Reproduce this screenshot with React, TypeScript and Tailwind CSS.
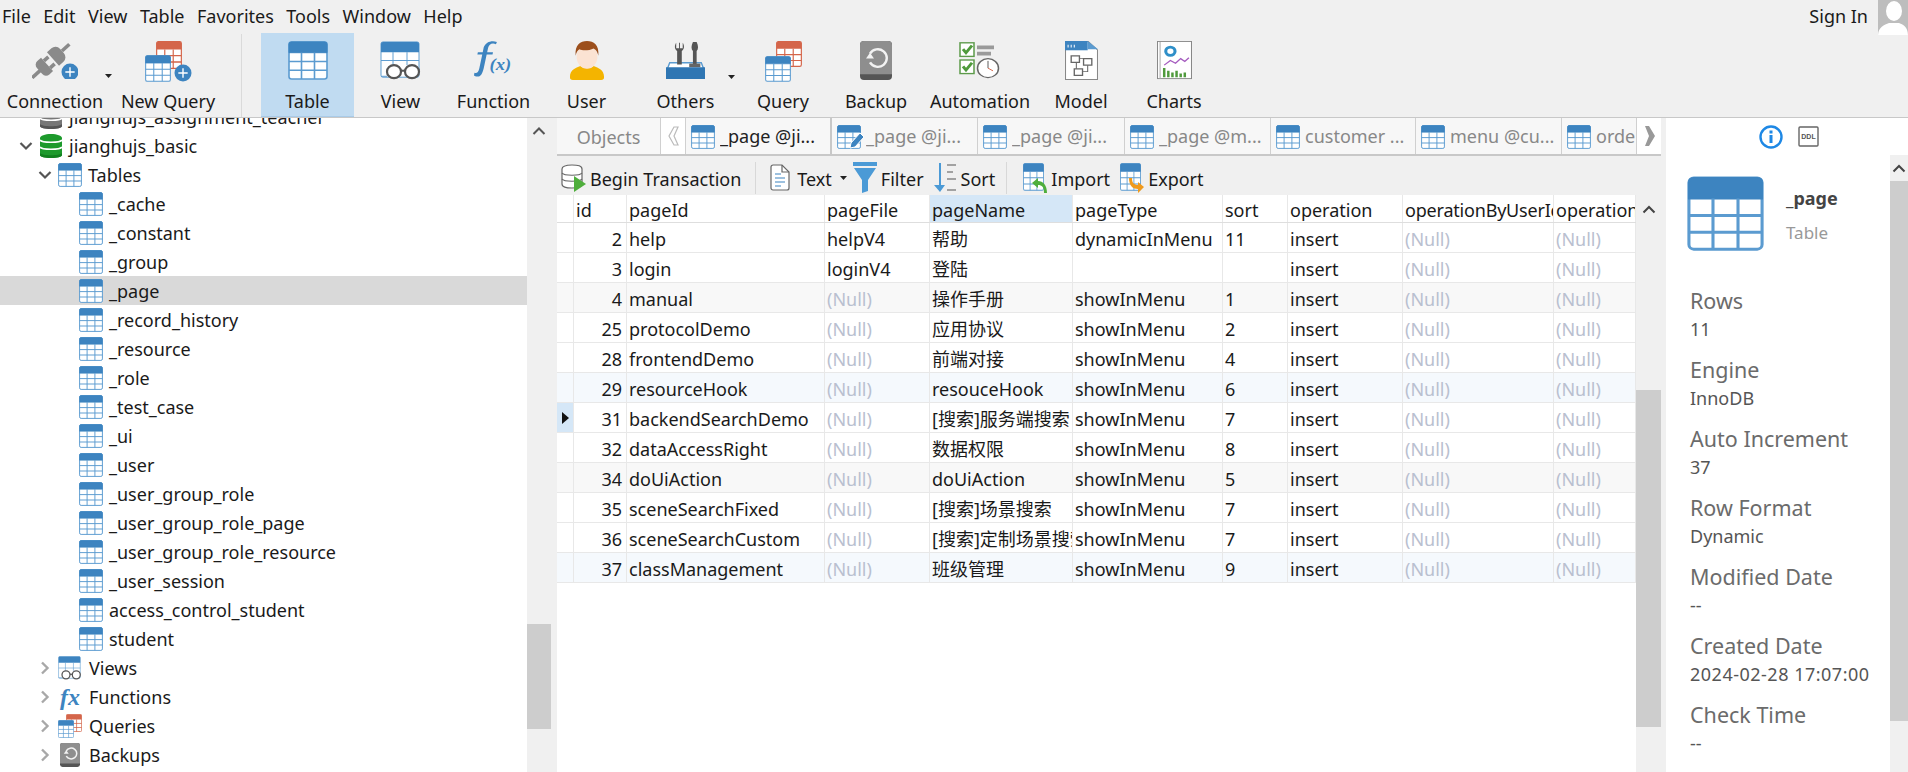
import { ReactNode } from "react";

const BLUE = "#3d84c0";
const CELL = "#5b9bd0";

const TableIcon = ({ w = 24, h = 24, className = "" }: { w?: number; h?: number; className?: string }) => (
  <svg width={w} height={h} viewBox="0 0 40 40" preserveAspectRatio="none" className={className}>
    <rect x="1" y="1" width="38" height="38" rx="2.5" fill="#fff" stroke={CELL} strokeWidth="1.6" />
    <path d="M1 12V3.5A2.5 2.5 0 0 1 3.5 1h33A2.5 2.5 0 0 1 39 3.5V12z" fill={BLUE} stroke={BLUE} />
    <path d="M1 21h38M1 30h38M13.5 12v27M26.500 12v27" stroke={CELL} strokeWidth="1.6" fill="none" />
  </svg>
);

const OrangeTable = ({ className = "" }: { className?: string }) => (
  <svg viewBox="0 0 40 40" preserveAspectRatio="none" className={className}>
    <rect x="1" y="1" width="38" height="38" rx="2.5" fill="#fff" stroke="#d4654a" strokeWidth="1.8" />
    <path d="M1 12V3.500A2.500 2.500 0 0 1 3.500 1h33A2.500 2.500 0 0 1 39 3.500V12z" fill="#d4654a" />
    <path d="M1 21h38M1 30h38M13.500 12v27M26.500 12v27" stroke="#d4654a" strokeWidth="1.800" fill="none" />
  </svg>
);

const PlusBadge = ({ x, y, r }: { x: number; y: number; r: number }) => (
  <g>
    <circle cx={x} cy={y} r={r} fill={BLUE} />
    <path d={`M${x - r * 0.55} ${y}h${r * 1.1}M${x} ${y - r * 0.55}v${r * 1.1}`} stroke="#fff" strokeWidth="1.4" />
  </g>
);

const PlugIcon = () => (
  <svg width="46" height="38" viewBox="0 0 46 38">
    <g transform="translate(21 18) rotate(-42)" fill="#8a8a8a">
      <rect x="-28" y="-1.800" width="12" height="3.600" />
      <path d="M-18 -4a5 5 0 0 1 5-5h5V9h-5a5 5 0 0 1-5-5z" />
      <rect x="-8" y="-6.500" width="6" height="3.600" />
      <rect x="-8" y="2.900" width="6" height="3.600" />
      <path d="M0-9h6a6 6 0 0 1 6 6V3a6 6 0 0 1-6 6H0z" />
      <rect x="12" y="-1.800" width="10" height="3.600" />
    </g>
    <PlusBadge x={38} y={31} r={8.500} />
  </svg>
);

const NewQueryIcon = () => (
  <div className="relative h-[41px] w-[47px]">
    <OrangeTable className="absolute left-[11px] top-0 h-[28px] w-[26px]" />
    <TableIcon w={26} h={27} className="absolute left-0 top-[14px]" />
    <svg width="18" height="18" viewBox="0 0 18 18" className="absolute left-[29px] top-[23px]">
      <PlusBadge x={9} y={9} r={8.500} />
    </svg>
  </div>
);

const ViewIcon = ({ w = 42, h = 39 }: { w?: number; h?: number }) => (
  <svg width={w} height={h} viewBox="0 0 42 42" preserveAspectRatio="none">
    <rect x="1" y="1" width="38" height="38" rx="2" fill="#fff" stroke={CELL} strokeWidth="1" />
    <path d="M1 12V3A2 2 0 0 1 3 1h34a2 2 0 0 1 2 2v9z" fill={BLUE} />
    <path d="M1 21h38M13 12v14M27 12v14M1 38h6" stroke={CELL} strokeWidth="1" fill="none" />
    <circle cx="14" cy="33" r="7" fill="#fff" stroke="#555" strokeWidth="2.2" />
    <circle cx="32" cy="33" r="7" fill="#fff" stroke="#555" strokeWidth="2.2" />
    <path d="M21 32h4" stroke="#555" strokeWidth="2.2" />
  </svg>
);

const FunctionIcon = () => (
  <svg width="43" height="38" viewBox="0 0 44 42" preserveAspectRatio="none">
    <path d="M2 38c5 3 8 1 10-8l3-15h6l.5-2.500h-6l1-5c1-4 4-6 8-4l1-2.500C20-1 14 1 12 7l-1 5.500H6L5.500 15h5L7.500 30c-1 5-3 6-5 5z" fill={BLUE} />
    <text x="18" y="32" fontFamily="'Liberation Serif',serif" fontStyle="italic" fontSize="19" fontWeight="700" fill={BLUE}>(x)</text>
  </svg>
);

const UserIcon = () => (
  <svg width="36" height="39" viewBox="0 0 38 42" preserveAspectRatio="none">
    <path d="M1 39c0-8 6-10 11-12 3 3 11 3 14 0 5 2 11 4 11 12 0 2-1 3-3 3H4c-2 0-3-1-3-3z" fill="#f4b400" />
    <ellipse cx="19" cy="17" rx="11" ry="13" fill="#fbe3d3" />
    <path d="M7 16C6 4 12 0 19 0s13 4 12 16c-1-5-3-7-5-8-4 2-11 3-15 1-2 1-3 3-4 7z" fill="#9c4f1c" />
  </svg>
);

const OthersIcon = () => (
  <svg width="39" height="38" viewBox="0 0 42 42" preserveAspectRatio="none">
    <path d="M4 24h34l3 8v8H1v-8z" fill="#fff" stroke="#5b9bd0" strokeWidth="1.500" />
    <path d="M8 2c-2 3-2 7 1 9v15h5V11c3-2 3-6 1-9v6h-3V2h-1v6H8z" fill="#555" transform="translate(3 0)" />
    <path d="M29 1c-2 4-2 8 0 10v15h4V11c2-2 2-6 0-10z" fill="#555" />
    <path d="M25 25h12v4H25z" fill="#666" />
    <path d="M0 29h42v13H0z" fill="#2f76b3" />
  </svg>
);

const QueryIcon = () => (
  <div className="relative h-[41px] w-[37px]">
    <OrangeTable className="absolute left-[11px] top-0 h-[26px] w-[26px]" />
    <TableIcon w={26} h={26} className="absolute left-0 top-[15px]" />
  </div>
);

const BackupIcon = ({ w = 32, h = 39 }: { w?: number; h?: number }) => (
  <svg width={w} height={h} viewBox="0 0 32 40" preserveAspectRatio="none">
    <rect x="0" y="0" width="32" height="40" rx="4" fill="#555" />
    <path d="M0 4a4 4 0 0 1 4-4h24a4 4 0 0 1 4 4v30H0z" fill="#8e8e8e" />
    <path d="M9 13a9 9 0 1 1 0 9" fill="none" stroke="#f2f2f2" strokeWidth="2.400" transform="translate(1 0)" />
    <path d="M6 18h8l-4-6z" fill="#f2f2f2" />
  </svg>
);

const AutomationIcon = () => (
  <svg width="42" height="38" viewBox="0 0 42 42" preserveAspectRatio="none">
    <rect x="1" y="2" width="14" height="15" fill="#fff" stroke="#5c9a4a" strokeWidth="1.500" />
    <path d="M4 9l3 4 6-8" fill="none" stroke="#4f9a3c" strokeWidth="3" />
    <rect x="1" y="21" width="14" height="15" fill="#fff" stroke="#5c9a4a" strokeWidth="1.500" />
    <path d="M4 28l3 4 6-8" fill="none" stroke="#4f9a3c" strokeWidth="3" />
    <path d="M18 5h17v4H18zM18 12h14v4H18z" fill="#9a9a9a" />
    <circle cx="29" cy="30" r="10.500" fill="#fff" stroke="#666" strokeWidth="1.500" />
    <path d="M29 22v8" stroke="#555" strokeWidth="1" />
    <path d="M29 30l5 3" stroke="#d4654a" strokeWidth="1" />
  </svg>
);

const ModelIcon = () => (
  <svg width="33" height="39" viewBox="0 0 32 42" preserveAspectRatio="none">
    <path d="M.5.5h22l9 9v32H.5z" fill="#fff" stroke="#888" />
    <path d="M0 0h22v10H0z" fill={BLUE} />
    <path d="M22 0l10 9H22z" fill="#5b9bd0" />
    <path d="M3 7V4M6 7V4M9 7V4" stroke="#fff" />
    <path d="M6 16h8v7H6zM18 19h8v7h-8zM9 30h8v7H9z" fill="#fff" stroke="#666" strokeWidth="1.300" />
    <path d="M14 19h4M11 23v7M22 26v7h-5" stroke="#666" fill="none" />
  </svg>
);

const ChartsIcon = () => (
  <svg width="35" height="39" viewBox="0 0 34 42" preserveAspectRatio="none">
    <rect x=".5" y=".5" width="33" height="40" fill="#fff" stroke="#888" />
    <path d="M3 1v40" stroke="#aaa" />
    <circle cx="13" cy="11" r="4.500" fill="none" stroke="#2f8fc8" strokeWidth="3" />
    <path d="M7 26l6-5 5 3 5-5 4 3 4-4" fill="none" stroke="#a55bbf" strokeWidth="1.300" />
    <path d="M7 39V29M11 39V32M15 39V34M19 39V32M23 39V35M27 39V34" stroke="#4f9a3c" strokeWidth="2.400" />
  </svg>
);

const DbIcon = ({ color, dark }: { color: string; dark: string }) => (
  <svg width="24" height="24" viewBox="0 0 24 24">
    <path d="M1 4c0-2 5-4 11-4s11 2 11 4v17c0 2-5 3-11 3S1 23 1 21z" fill={color} />
    <path d="M1 6c2 3 20 3 22 0M1 13c2 3 20 3 22 0" fill="none" stroke="#fff" strokeWidth="1.600" />
    <path d="M1 19c2 3 20 3 22 0v2c0 2-5 3-11 3S1 23 1 21z" fill={dark} />
  </svg>
);

const Chevron = ({ open }: { open: boolean }) => (
  <svg width="14" height="14" viewBox="0 0 14 14">
    {open ? (
      <path d="M1.500 4 7 9.500 12.500 4" fill="none" stroke="#555" strokeWidth="2.200" />
    ) : (
      <path d="M4 1.500 9.500 7 4 12.500" fill="none" stroke="#a8a8a8" strokeWidth="2.400" />
    )}
  </svg>
);

const Caret = () => (
  <svg width="7" height="4" viewBox="0 0 7 4">
    <path d="M0 0h7L3.500 4z" fill="#222" />
  </svg>
);

const ToolButton = ({ width, icon, label, active, caret }: { width: string; icon: ReactNode; label: string; active?: boolean; caret?: boolean }) => (
  <div className={`relative flex h-[84px] shrink-0 flex-col items-center ${width} ${active ? "border-b border-[#a9cbe8] bg-[#c0dbf1]" : ""}`}>
    <div className="mt-[8px] flex h-[40px] items-start">{icon}</div>
    <div className="mt-[8px] whitespace-nowrap text-[18px] leading-[24px] text-[#1a1a1a]">{label}</div>
    {caret && (
      <div className="absolute right-[3px] top-[42px] flex">
        <Caret />
      </div>
    )}
  </div>
);

const tables = [
  "_cache", "_constant", "_group", "_page", "_record_history", "_resource", "_role", "_test_case", "_ui", "_user",
  "_user_group_role", "_user_group_role_page", "_user_group_role_resource", "_user_session", "access_control_student", "student",
];

const TreeRow = ({ indent, chevron, icon, label, selected, gap = "ml-[6px]" }: { indent: string; chevron?: "open" | "closed"; icon: ReactNode; label: string; selected?: boolean; gap?: string }) => (
  <div className={`flex h-[29px] items-center ${indent} ${selected ? "bg-[#d9d9d9]" : ""}`}>
    <div className="flex w-[20px] shrink-0 justify-start">{chevron && <Chevron open={chevron === "open"} />}</div>
    <div className="flex w-[24px] shrink-0 justify-center">{icon}</div>
    <span className={`whitespace-nowrap pt-[2px] text-[18px] text-[#1a1a1a] ${gap}`}>{label}</span>
  </div>
);

const Sidebar = () => (
  <div className="flex w-[557px] shrink-0 bg-[#f0f0f0]">
    <div className="h-full w-[527px] overflow-hidden bg-white">
      <div className="mt-[-16px]">
        <TreeRow indent="pl-[19px]" icon={<DbIcon color="#777" dark="#555" />} label="jianghujs_assignment_teacher" />
        <TreeRow indent="pl-[19px]" chevron="open" icon={<DbIcon color="#1d9a2c" dark="#12801f" />} label="jianghujs_basic" />
        <TreeRow indent="pl-[38px]" chevron="open" icon={<TableIcon />} label="Tables" />
        {tables.map((t) => (
          <TreeRow key={t} indent="pl-[59px]" icon={<TableIcon />} label={t} selected={t === "_page"} />
        ))}
        <TreeRow indent="pl-[38px]" chevron="closed" gap="ml-[7px]" icon={<ViewIcon w={24} h={24} />} label="Views" />
        <TreeRow
          indent="pl-[38px]"
          chevron="closed"
          gap="ml-[7px]"
          icon={<span className="font-['Liberation_Serif',serif] text-[24px] font-bold italic leading-[24px] text-[#3d84c0]">fx</span>}
          label="Functions"
        />
        <TreeRow
          indent="pl-[38px]"
          chevron="closed"
          gap="ml-[7px]"
          icon={
            <div className="relative h-[24px] w-[24px]">
              <OrangeTable className="absolute left-[8px] top-0 h-[18px] w-[16px]" />
              <TableIcon w={16} h={18} className="absolute left-0 top-[6px]" />
            </div>
          }
          label="Queries"
        />
        <TreeRow indent="pl-[38px]" chevron="closed" gap="ml-[7px]" icon={<BackupIcon w={20} h={24} />} label="Backups" />
      </div>
    </div>
    <div className="flex w-[24px] shrink-0 flex-col">
      <div className="flex h-[26px] items-center justify-center">
        <svg width="14" height="14" viewBox="0 0 14 14">
          <path d="M1.500 10 7 4.500 12.500 10" fill="none" stroke="#555" strokeWidth="2" />
        </svg>
      </div>
      <div className="mt-[480px] h-[105px] bg-[#cdcdcd]" />
    </div>
  </div>
);

const tabs = [
  { label: "_page @ji...", w: "w-[146px]", active: true },
  { label: "_page @ji...", w: "w-[146px]", edit: true },
  { label: "_page @ji...", w: "w-[147px]" },
  { label: "_page @m...", w: "w-[146px]" },
  { label: "customer ...", w: "w-[145px]" },
  { label: "menu @cu...", w: "w-[146px]" },
  { label: "orde", w: "w-[75px]" },
];

const TabBar = () => (
  <div className="flex h-[38px] shrink-0 border-b-2 border-[#c8c8c8] bg-[#f7f7f7]">
    <div className="flex w-[103px] shrink-0 items-center justify-center pt-[2px] text-[18px] text-[#888]">Objects</div>
    <div className="flex w-[26px] shrink-0 items-center justify-center border-x border-[#d0d0d0] bg-white">
      <svg width="11" height="20" viewBox="0 0 11 20">
        <path d="M6 1 1 10l5 9h4L6 10l4-9z" fill="#fff" stroke="#bbb" strokeWidth="1.200" />
      </svg>
    </div>
    {tabs.map((t, i) => (
      <div key={i} className={`flex shrink-0 items-center gap-[5px] pl-[5px] pt-[1px] ${t.w} ${i > 0 ? "border-r border-[#d0d0d0]" : "border-r-2 border-[#c8c8c8]"}`}>
        <div className="relative shrink-0">
          <TableIcon w={24} h={24} />
          {t.edit && (
            <svg width="16" height="18" viewBox="0 0 16 18" className="absolute bottom-0 right-[-4px]">
              <path d="M2 12 11 2l4 4-9 10-5 1z" fill="#3d84c0" stroke="#fff" />
            </svg>
          )}
        </div>
        <span className={`overflow-hidden whitespace-nowrap text-[18px] ${t.active ? "text-[#222]" : "text-[#888]"}`}>{t.label}</span>
      </div>
    ))}
    <div className="flex flex-1 items-center justify-center bg-white">
      <svg width="11" height="20" viewBox="0 0 11 20">
        <path d="M1 0h4l6 10-6 10H1l4-10z" fill="#999" />
      </svg>
    </div>
  </div>
);

const SubItem = ({ icon, label, ml, caret }: { icon: ReactNode; label: string; ml: string; caret?: boolean }) => (
  <div className={`flex items-center ${ml}`}>
    {icon}
    <span className="ml-[4px] whitespace-nowrap pt-[3px] text-[18px] text-[#1a1a1a]">{label}</span>
    {caret && (
      <span className="ml-[8px] flex">
        <Caret />
      </span>
    )}
  </div>
);

const SubToolbar = () => (
  <div className="flex h-[39px] shrink-0 items-center bg-[#f0f0f0] pl-[4px] pt-[4px]">
    <SubItem
      ml=""
      label="Begin Transaction"
      icon={
        <svg width="25" height="28" viewBox="0 0 25 28">
          <path d="M1 5c0-3 4-4 10-4s10 1 10 4v15c0 3-4 4-10 4S1 23 1 20z" fill="#fff" stroke="#666" strokeWidth="1.200" />
          <path d="M1 9c2 3 18 3 20 0M1 15c2 3 18 3 20 0" fill="none" stroke="#666" strokeWidth="1.200" />
          <path d="M13 12v16l12-8z" fill="#4fae3c" />
        </svg>
      }
    />
    <div className="ml-[14px] h-[32px] w-px bg-[#d8d8d8]" />
    <SubItem
      ml="ml-[14px]"
      label="Text"
      caret
      icon={
        <svg width="20" height="27" viewBox="0 0 20 27" className="mr-[3px]">
          <path d="M1 3a2 2 0 0 1 2-2h9l7 7v16a2 2 0 0 1-2 2H3a2 2 0 0 1-2-2z" fill="#fff" stroke="#666" strokeWidth="1.200" />
          <path d="M12 1v7h7" fill="none" stroke="#666" strokeWidth="1.200" />
          <path d="M5 10h6M5 14h10M5 18h10M5 22h6" stroke="#3d84c0" strokeWidth="1.200" />
        </svg>
      }
    />
    <SubItem
      ml="ml-[6px]"
      label="Filter"
      icon={
        <svg width="24" height="31" viewBox="0 0 24 31">
          <path d="M0 0h24v4H0zM1 6h22l-8 12v11l-6 2V18z" fill="#4b9ad6" />
        </svg>
      }
    />
    <SubItem
      ml="ml-[10px]"
      label="Sort"
      icon={
        <svg width="23" height="29" viewBox="0 0 23 29">
          <path d="M5 0h2v22h4l-5 7-6-7h5z" fill="#4b9ad6" />
          <path d="M13 2h9M13 9h6M13 16h9M13 27h9" stroke="#888" strokeWidth="1.400" />
        </svg>
      }
    />
    <div className="ml-[11px] h-[32px] w-px bg-[#d8d8d8]" />
    <SubItem
      ml="ml-[16px]"
      label="Import"
      icon={
        <div className="relative h-[30px] w-[24px]">
          <TableIcon w={21} h={28} />
          <svg width="15" height="15" viewBox="0 0 15 15" className="absolute bottom-0 right-0">
            <path d="M6 0 0 5l6 5V7c4 0 6 2 6 8h3C15 7 11 3 6 3z" fill="#4fae3c" />
          </svg>
        </div>
      }
    />
    <SubItem
      ml="ml-[10px]"
      label="Export"
      icon={
        <div className="relative h-[30px] w-[24px]">
          <TableIcon w={21} h={28} />
          <svg width="15" height="15" viewBox="0 0 15 15" className="absolute bottom-0 right-0">
            <path d="M0 0h3c0 5 2 7 6 7V4l6 5-6 6v-4C4 11 0 8 0 0z" fill="#f09a1c" />
          </svg>
        </div>
      }
    />
  </div>
);

const CJK = (v: string) => /[\u4e00-\u9fff]/.test(v);
const N = "(Null)";
const rows: [string, string, string, string, string, string][] = [
  ["2", "help", "helpV4", "帮助", "dynamicInMenu", "11"],
  ["3", "login", "loginV4", "登陆", "", ""],
  ["4", "manual", N, "操作手册", "showInMenu", "1"],
  ["25", "protocolDemo", N, "应用协议", "showInMenu", "2"],
  ["28", "frontendDemo", N, "前端对接", "showInMenu", "4"],
  ["29", "resourceHook", N, "resouceHook", "showInMenu", "6"],
  ["31", "backendSearchDemo", N, "[搜索]服务端搜索", "showInMenu", "7"],
  ["32", "dataAccessRight", N, "数据权限", "showInMenu", "8"],
  ["34", "doUiAction", N, "doUiAction", "showInMenu", "5"],
  ["35", "sceneSearchFixed", N, "[搜索]场景搜索", "showInMenu", "7"],
  ["36", "sceneSearchCustom", N, "[搜索]定制场景搜索", "showInMenu", "7"],
  ["37", "classManagement", N, "班级管理", "showInMenu", "9"],
];

const rowBg = ["", "", "bg-[#f8f8f8]", "", "", "bg-[#f5f9fd]", "", "", "bg-[#f8f8f8]", "", "", "bg-[#f5f9fd]"];
const COLS = "grid-cols-[17px_53px_198px_105px_143px_150px_65px_115px_151px_82px]";

const Cell = ({ children, right, className = "" }: { children?: ReactNode; right?: boolean; className?: string }) => (
  <div className={`overflow-hidden whitespace-nowrap border-r border-b border-[#e8e8e8] text-[18px] leading-[32px] ${right ? "pr-[4px] text-right" : "pl-[2px]"} ${className}`}>
    {children}
  </div>
);

const Grid = () => (
  <div className="flex min-h-0 flex-1 bg-white">
    <div className="w-[1079px] shrink-0">
      <div className={`grid ${COLS} h-[28px] border-b border-[#dedede] text-[#1a1a1a]`}>
        {["", "id", "pageId", "pageFile", "pageName", "pageType", "sort", "operation", "operationByUserId", "operationAt"].map((h, i) => (
          <div
            key={i}
            className={`overflow-hidden whitespace-nowrap border-r border-[#e8e8e8] pl-[2px] text-[18px] leading-[30px] ${i === 8 ? "tracking-[-0.2px]" : ""} ${h === "pageName" ? "bg-[#d5e7f7]" : ""}`}
          >
            {h}
          </div>
        ))}
      </div>
      {rows.map((r, i) => (
        <div key={r[0]} className={`grid ${COLS} h-[30px] text-[#1a1a1a] ${rowBg[i]}`}>
          <Cell className={`flex items-center !pl-[5px] ${r[0] === "31" ? "bg-[#d5e7f7]" : ""}`}>
            {r[0] === "31" && (
              <svg width="7" height="12" viewBox="0 0 7 12">
                <path d="M0 0l7 6-7 6z" fill="#111" />
              </svg>
            )}
          </Cell>
          <Cell right>{r[0]}</Cell>
          <Cell>{r[1]}</Cell>
          <Cell className={r[2] === N ? "text-[#b9c0d0]" : ""}>{r[2]}</Cell>
          <Cell className={CJK(r[3]) ? "text-[17px]" : ""}>{r[3]}</Cell>
          <Cell>{r[4]}</Cell>
          <Cell>{r[5]}</Cell>
          <Cell>insert</Cell>
          <Cell className="text-[#b9c0d0]">{N}</Cell>
          <Cell className="text-[#b9c0d0]">{N}</Cell>
        </div>
      ))}
    </div>
    <div className="flex w-[25px] shrink-0 flex-col bg-[#f0f0f0]">
      <div className="flex h-[28px] items-center justify-center">
        <svg width="14" height="10" viewBox="0 0 14 10">
          <path d="M1.500 8.500 7 3l5.500 5.500" fill="none" stroke="#444" strokeWidth="2" />
        </svg>
      </div>
      <div className="mt-[167px] h-[337px] bg-[#cdcdcd]" />
    </div>
  </div>
);

const props = [
  ["Rows", "11"],
  ["Engine", "InnoDB"],
  ["Auto Increment", "37"],
  ["Row Format", "Dynamic"],
  ["Modified Date", "--"],
  ["Created Date", "2024-02-28 17:07:00"],
  ["Check Time", "--"],
];

const RightPanel = () => (
  <div className="flex w-[242px] shrink-0 flex-col bg-white">
    <div className="flex h-[37px] shrink-0 items-center pl-[93px]">
      <svg width="24" height="24" viewBox="0 0 24 24">
        <circle cx="12" cy="12" r="10.500" fill="#fff" stroke="#1e88e5" strokeWidth="2.400" />
        <path d="M10.500 10h3v8h-3zM10.500 5.500h3v3h-3z" fill="#1e88e5" />
      </svg>
      <svg width="21" height="21" viewBox="0 0 21 21" className="ml-[15px]">
        <rect x="1" y="1" width="19" height="19" rx="1" fill="#fff" stroke="#666" strokeWidth="1.400" />
        <text x="10.500" y="13" textAnchor="middle" fontFamily="'Liberation Sans',sans-serif" fontSize="7" fontWeight="700" fill="#555">DDL</text>
      </svg>
    </div>
    <div className="flex min-h-0 flex-1">
      <div className="w-[224px] shrink-0 overflow-hidden pl-[24px]">
        <div className="mt-[21px] flex h-[75px]">
          <div className="ml-[-3px] shrink-0">
            <TableIcon w={77} h={75} />
          </div>
          <div className="ml-[22px] flex flex-col">
            <div className="mt-[10px] text-[18px] font-bold leading-[24px] text-[#444]">_page</div>
            <div className="mt-[11px] text-[17px] leading-[24px] text-[#999]">Table</div>
          </div>
        </div>
        <div className="mt-[33px]">
          {props.map(([k, v]) => (
            <div key={k} className="h-[69px] whitespace-nowrap">
              <div className="text-[21.500px] leading-[34px] text-[#6b6b6b]">{k}</div>
              <div className={`text-[18px] leading-[22px] text-[#555] ${v.startsWith("2024") ? "tracking-[0.5px]" : ""}`}>{v}</div>
            </div>
          ))}
        </div>
      </div>
      <div className="flex flex-1 flex-col bg-[#f0f0f0]">
        <div className="flex h-[26px] shrink-0 items-center justify-center">
          <svg width="14" height="10" viewBox="0 0 14 10">
            <path d="M1.500 8.500 7 3l5.500 5.500" fill="none" stroke="#444" strokeWidth="2" />
          </svg>
        </div>
        <div className="h-[540px] bg-[#cdcdcd]" />
      </div>
    </div>
  </div>
);

export default function App() {
  return (
    <div className="flex h-[772px] w-[1908px] flex-col overflow-hidden bg-[#f0f0f0] font-['Noto_Sans','Noto_Sans_CJK_SC',sans-serif]">
      <div className="flex h-[33px] shrink-0 items-center pl-[2px] text-[18px] text-[#1a1a1a]">
        {["File", "Edit", "View", "Table", "Favorites", "Tools", "Window", "Help"].map((m) => (
          <span key={m} className="mr-[12.500px]">
            {m}
          </span>
        ))}
        <span className="ml-auto mr-[10px]">Sign In</span>
        <div className="flex h-[35px] w-[30px] items-end justify-center overflow-hidden self-start bg-[#bdbdbd]">
          <svg width="30" height="35" viewBox="0 0 30 35">
            <ellipse cx="16" cy="11" rx="8" ry="10" fill="#fff" />
            <path d="M0 36c0-9 6-11 11-13h10c5 2 9 4 9 13z" fill="#fff" />
          </svg>
        </div>
      </div>
      <div className="flex h-[84px] shrink-0 items-start">
        <ToolButton width="w-[110px]" icon={<PlugIcon />} label="Connection" />
        <div className="ml-[-8px] mr-[8px] flex w-[12px] shrink-0 justify-center pt-[41px]">
          <Caret />
        </div>
        <ToolButton width="w-[92px]" icon={<NewQueryIcon />} label="New Query" />
        <div className="ml-[27px] mt-[1px] h-[83px] w-px shrink-0 bg-[#dadada]" />
        <div className="w-[19px] shrink-0" />
        <ToolButton width="w-[93px]" active icon={<TableIcon w={40} h={39} />} label="Table" />
        <ToolButton width="w-[93px]" icon={<ViewIcon />} label="View" />
        <ToolButton width="w-[93px]" icon={<FunctionIcon />} label="Function" />
        <ToolButton width="w-[93px]" icon={<UserIcon />} label="User" />
        <ToolButton width="w-[105px]" icon={<OthersIcon />} label="Others" caret />
        <ToolButton width="w-[90px]" icon={<QueryIcon />} label="Query" />
        <ToolButton width="w-[96px]" icon={<BackupIcon />} label="Backup" />
        <ToolButton width="w-[112px]" icon={<AutomationIcon />} label="Automation" />
        <ToolButton width="w-[90px]" icon={<ModelIcon />} label="Model" />
        <ToolButton width="w-[96px]" icon={<ChartsIcon />} label="Charts" />
      </div>
      <div className="flex min-h-0 flex-1 border-t border-[#c8c8c8]">
        <Sidebar />
        <div className="flex w-[1104px] shrink-0 flex-col">
          <TabBar />
          <SubToolbar />
          <Grid />
        </div>
        <div className="w-[5px] shrink-0" />
        <RightPanel />
      </div>
    </div>
  );
}
